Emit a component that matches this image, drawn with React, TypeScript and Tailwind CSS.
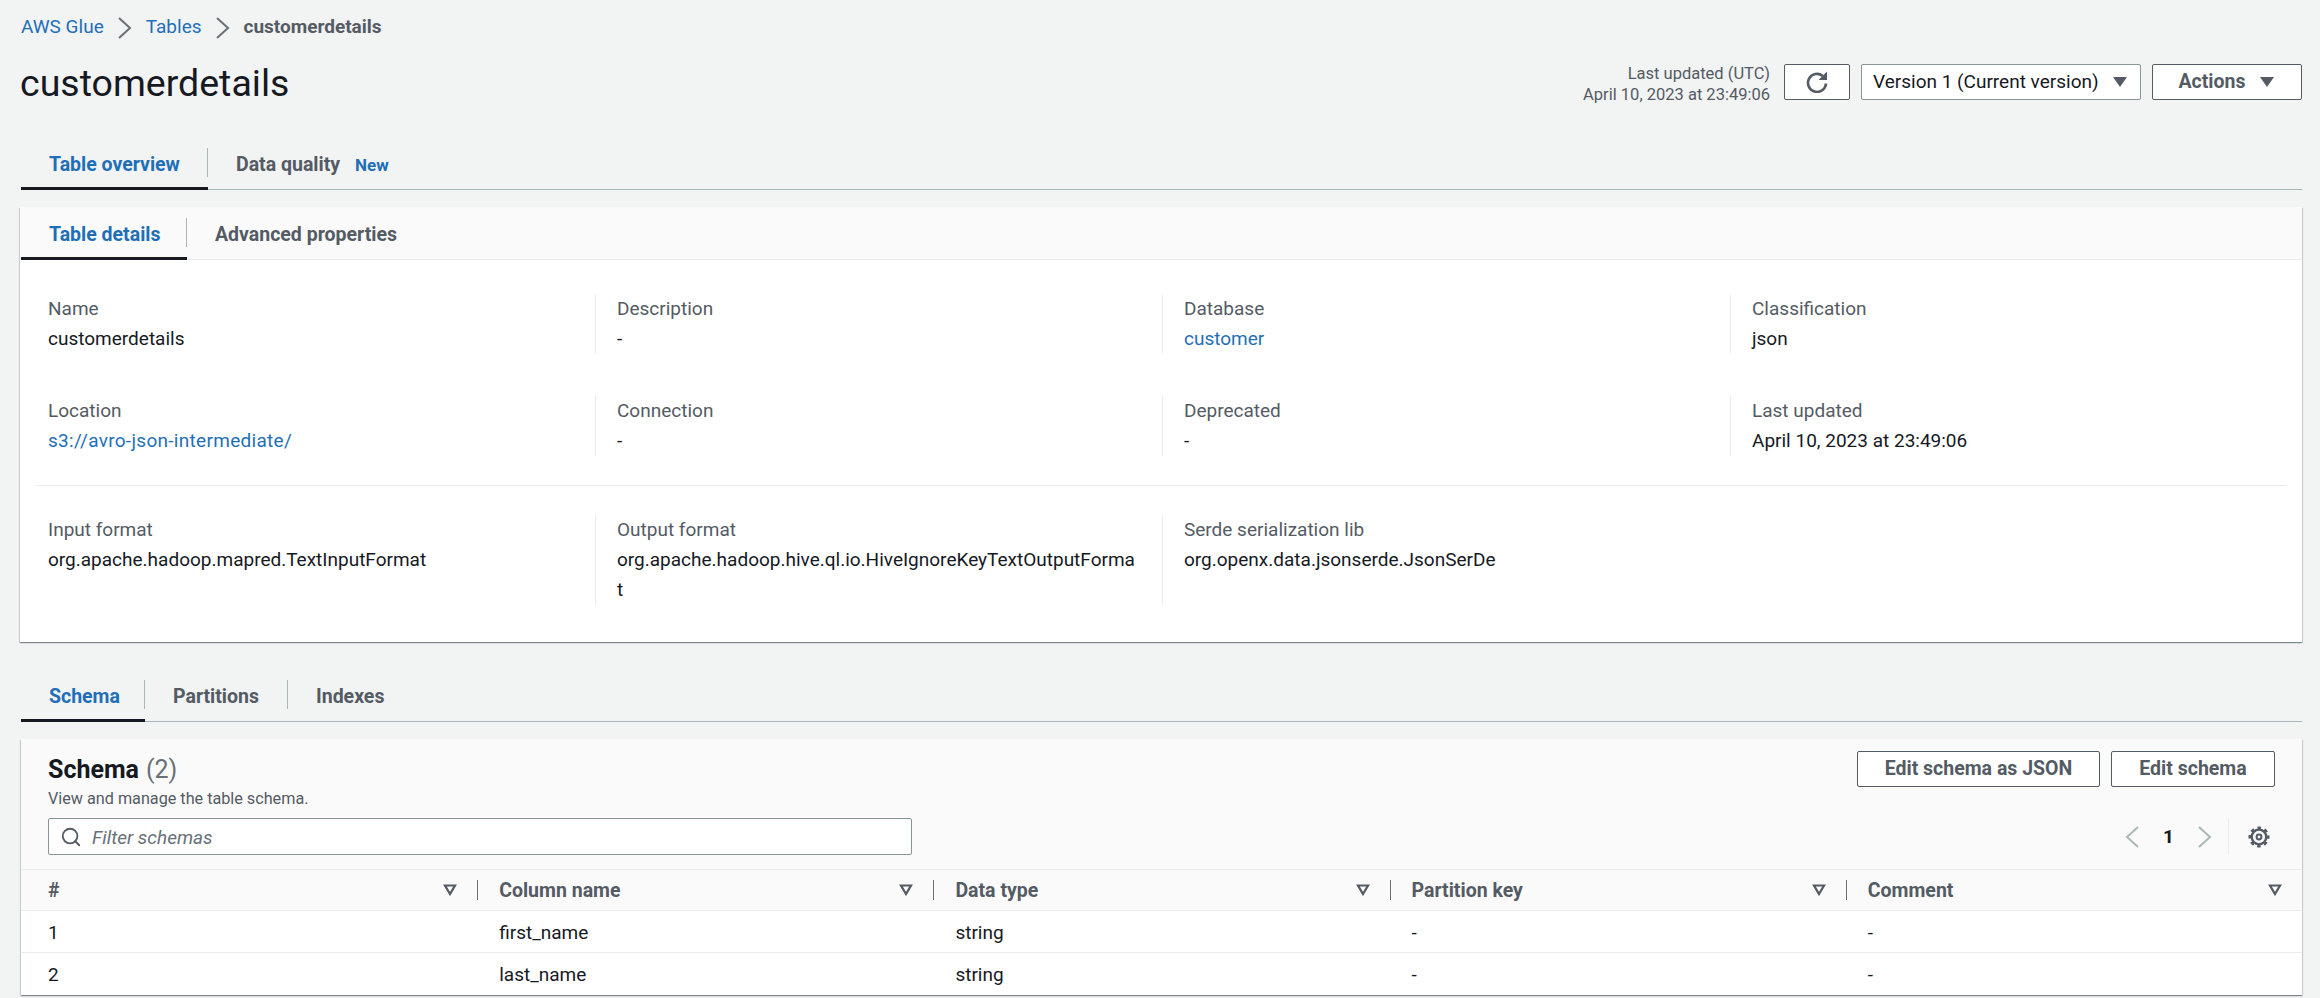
import React from 'react';
import { Search } from 'lucide-react';

const Chevron = ({ left = false, color = '#687078' }: { left?: boolean; color?: string }) => (
  <svg width="14" height="24" viewBox="0 0 14 24" fill="none" stroke={color} strokeWidth="2">
    <path d={left ? 'M13 2 L2 12 L13 22' : 'M1 2 L12 12 L1 22'} />
  </svg>
);

const Caret = () => (
  <svg width="16" height="12" viewBox="0 0 16 12" fill="#545b64">
    <path d="M1 1 H15 L8 11 Z" />
  </svg>
);

const SortIcon = () => (
  <svg width="14" height="12" viewBox="0 0 14 12" fill="none" stroke="#545b64" strokeWidth="2.2">
    <path d="M2 1.5 H12 L7 10 Z" />
  </svg>
);

const RefreshIcon = () => (
  <svg width="22" height="22" viewBox="0 0 22 22" fill="none">
    <path d="M16.8 5 A9 9 0 1 0 20 12.5" stroke="#545b64" strokeWidth="2.6" />
    <path d="M21 0.5 V9 H12.5 Z" fill="#545b64" />
  </svg>
);

const GearIcon = () => (
  <svg width="24" height="24" viewBox="0 0 24 24" fill="none" stroke="#545b64">
    <circle cx="12" cy="12" r="7.3" strokeWidth="2.3" />
    <circle cx="12" cy="12" r="9.2" strokeWidth="2.6" strokeDasharray="3.6 3.62" strokeDashoffset="1.8" />
    <circle cx="12" cy="12" r="2.4" strokeWidth="2" />
  </svg>
);

const Tabs = ({ items, height, line = 'border-[#aab7b8]' }: { items: { label: string; width: number; badge?: string }[]; height: string; line?: string }) => (
  <div className={`flex ${height} border-b ${line}`}>
    {items.map((t, i) => (
      <div
        key={t.label}
        className={`relative flex items-center pb-[8px] pl-[28px] text-[19.5px] font-bold ${i === 0 ? 'text-[#1f6fb8]' : 'text-[#545b64]'}`}
        style={{ width: t.width }}
      >
        {t.label}
        {t.badge && <span className="ml-[15px] text-[17px] text-[#1f6fb8]">{t.badge}</span>}
        {i < items.length - 1 && <span className="absolute top-0 right-0 h-[29px] w-px bg-[#aab7b8]" />}
        {i === 0 && <span className="absolute bottom-[-1px] left-0 h-[3px] w-full bg-[#16191f]" />}
      </div>
    ))}
  </div>
);

const Field = ({ label, value, link, first }: { label: string; value: React.ReactNode; link?: boolean; first?: boolean }) => (
  <div className={first ? 'pl-[28px]' : 'border-l border-[#eaeded] pl-[21px]'}>
    <div className="text-[#545b64]">{label}</div>
    <div className={link ? 'text-[#1f6fb8]' : 'text-[#16191f]'}>{value}</div>
  </div>
);

const Button = ({ children, className = '' }: { children: React.ReactNode; className?: string }) => (
  <button className={`flex h-[36px] items-center justify-center rounded-[2px] border border-[#545b64] bg-white text-[19.5px] font-bold text-[#545b64] ${className}`}>
    {children}
  </button>
);

const columns = ['#', 'Column name', 'Data type', 'Partition key', 'Comment'];
const rows = [
  ['1', 'first_name', 'string', '-', '-'],
  ['2', 'last_name', 'string', '-', '-'],
];

const detailGrid = 'grid grid-cols-[575px_567px_568px_1fr]';
const cardShadow = 'shadow-[0_1px_1px_rgba(0,28,36,0.35),1px_1px_1px_rgba(0,28,36,0.12),-1px_1px_1px_rgba(0,28,36,0.12)]';

export default function App() {
  return (
    <div className="h-[998px] overflow-hidden bg-[#f2f3f3] pr-[18px] pl-[20px] font-['Roboto',sans-serif] text-[19px] leading-[30px] text-[#16191f]">
      <div className="flex h-[40px] items-end text-[19px] leading-[26px]">
        <span className="pl-px text-[#1f6fb8]">AWS Glue</span>
        <span className="mx-[14px]"><Chevron /></span>
        <span className="text-[#1f6fb8]">Tables</span>
        <span className="mx-[14px]"><Chevron /></span>
        <span className="font-bold text-[#545b64]">customerdetails</span>
      </div>

      <div className="mt-[24px] flex h-[36px] items-center justify-between">
        <h1 className="pt-[2px] text-[37.5px] leading-[36px] text-[#16191f]">customerdetails</h1>
        <div className="flex items-center">
          <div className="mr-[14px] pt-[3px] text-right text-[16.5px] leading-[21px] text-[#545b64]">
            <div>Last updated (UTC)</div>
            <div>April 10, 2023 at 23:49:06</div>
          </div>
          <Button className="w-[66px]"><RefreshIcon /></Button>
          <div className="ml-[11px] flex h-[36px] w-[280px] items-center justify-between rounded-[2px] border border-[#879596] bg-white pr-[12px] pl-[11px] text-[#16191f]">
            Version 1 (Current version)
            <Caret />
          </div>
          <Button className="ml-[11px] w-[150px] gap-[14px]">Actions <Caret /></Button>
        </div>
      </div>

      <div className="mt-[48px] pl-px">
        <Tabs
          height="h-[42px]"
          items={[
            { label: 'Table overview', width: 187 },
            { label: 'Data quality', width: 300, badge: 'New' },
          ]}
        />
      </div>

      <section className={`mt-[17px] h-[435px] bg-white ${cardShadow}`}>
        <div className="bg-[#fafafa] pl-px">
          <Tabs
            height="h-[53px] pt-[11px]"
            line="border-[#eaeded]"
            items={[
              { label: 'Table details', width: 166 },
              { label: 'Advanced properties', width: 300 },
            ]}
          />
        </div>
        <div className={`${detailGrid} pt-[34px]`}>
          <Field first label="Name" value="customerdetails" />
          <Field label="Description" value="-" />
          <Field label="Database" value="customer" link />
          <Field label="Classification" value="json" />
        </div>
        <div className={`${detailGrid} mt-[42px]`}>
          <Field first label="Location" value={<span className="tracking-[0.3px]">s3://avro-json-intermediate/</span>} link />
          <Field label="Connection" value="-" />
          <Field label="Deprecated" value="-" />
          <Field label="Last updated" value="April 10, 2023 at 23:49:06" />
        </div>
        <div className="mx-[16px] mt-[29px] h-px bg-[#eaeded]" />
        <div className={`${detailGrid} mt-[29px]`}>
          <Field first label="Input format" value="org.apache.hadoop.mapred.TextInputFormat" />
          <Field
            label="Output format"
            value={<>org.apache.hadoop.hive.ql.io.HiveIgnoreKeyTextOutputForma<br />t</>}
          />
          <Field label="Serde serialization lib" value="org.openx.data.jsonserde.JsonSerDe" />
          <div />
        </div>
      </section>

      <div className="mt-[38px] pl-px">
        <Tabs
          height="h-[42px]"
          items={[
            { label: 'Schema', width: 124 },
            { label: 'Partitions', width: 143 },
            { label: 'Indexes', width: 198 },
          ]}
        />
      </div>

      <section className={`mt-[17px] ml-px bg-white ${cardShadow}`}>
        <div className="h-[131px] border-b border-[#eaeded] bg-[#fafafa] pt-[12px] pr-[27px] pl-[27px]">
          <div className="flex justify-between">
            <div>
              <div className="flex h-[36px] items-center pt-[2px] text-[25px] font-bold text-[#16191f]">
                Schema <span className="ml-[7px] font-normal text-[#687078]">(2)</span>
              </div>
              <div className="mt-px text-[16.2px] leading-[22px] text-[#545b64]">View and manage the table schema.</div>
            </div>
            <div className="flex gap-[11px]">
              <Button className="w-[243px]">Edit schema as JSON</Button>
              <Button className="w-[164px]">Edit schema</Button>
            </div>
          </div>
          <div className="mt-[8px] flex items-center justify-between">
            <div className="flex h-[37px] w-[864px] items-center rounded-[2px] border border-[#879596] bg-white pl-[11px] text-[#687078] italic">
              <Search size={22} strokeWidth={2} className="mr-[10px] text-[#545b64]" />
              <span className="pt-[2px]">Filter schemas</span>
            </div>
            <div className="flex h-[37px] items-center">
              <Chevron left color="#aab7b8" />
              <span className="mx-[24px] font-bold text-[#16191f]">1</span>
              <Chevron color="#aab7b8" />
              <span className="mr-[18px] ml-[16px] h-[37px] w-px bg-[#eaeded]" />
              <span className="mr-[4px]"><GearIcon /></span>
            </div>
          </div>
        </div>
        <div className="grid h-[41px] grid-cols-5 items-center border-b border-[#eaeded] bg-[#fafafa] text-[19.5px] font-bold text-[#545b64]">
          {columns.map((c, i) => (
            <div key={c} className={`flex h-[20px] items-center justify-between pr-[20px] leading-[20px] ${i === 0 ? 'pl-[27px]' : 'border-l border-[#687078] pl-[21px]'}`}>
              <span className="pt-[2px]">{c}</span>
              <SortIcon />
            </div>
          ))}
        </div>
        {rows.map((r) => (
          <div key={r[0]} className="grid h-[42px] grid-cols-5 items-center border-b border-[#eaeded] last:border-b-0">
            {r.map((v, i) => (
              <div key={i} className={`pt-[2px] ${i === 0 ? 'pl-[27px]' : 'pl-[22px]'}`}>{v}</div>
            ))}
          </div>
        ))}
      </section>
    </div>
  );
}
